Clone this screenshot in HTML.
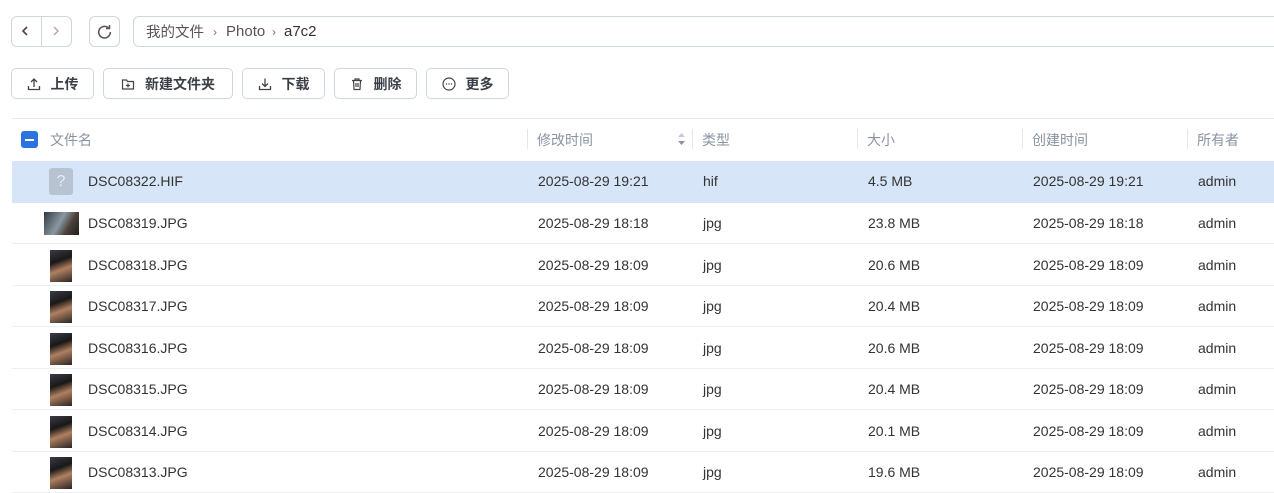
<!DOCTYPE html>
<html><head><meta charset="utf-8"><style>
*{box-sizing:border-box;margin:0;padding:0}
body{width:1274px;height:472px;overflow:hidden;background:#fff;font-family:"Liberation Sans","Noto Sans CJK SC",sans-serif;color:#333;position:relative}
.a{position:absolute}
.box{position:absolute;border:1px solid #cfd6e0;border-radius:6px;background:#fff}
.btn{position:absolute;top:68px;height:31px;border:1px solid #cfd6e0;border-radius:5px;display:flex;align-items:center;justify-content:center;font-size:14px;font-weight:bold;color:#3a3f47;gap:10px}
.btn svg{width:14px;height:14px}
.hd{position:absolute;top:130px;font-size:14px;color:#8a93a0}
.sep{position:absolute;top:129px;width:1px;height:20px;background:#e3e7ec}
.row{position:absolute;left:12px;width:1262px;height:41px;border-bottom:1px solid #edf0f3;font-size:14px;color:#333}
.row span{position:absolute;top:12px}
.th{position:absolute;left:38px;top:5px;width:22px;height:32px;background:linear-gradient(160deg,#3a3c48 0%,#1a1818 35%,#b08060 60%,#2a2424 100%)}
.bc{position:absolute;top:22px;height:20px;line-height:20px;font-size:15px;color:#555}
</style></head><body>
<div class="box" style="left:11px;top:16px;width:61px;height:31px"></div>
<div class="a" style="left:41px;top:17px;width:1px;height:29px;background:#cfd6e0"></div>
<svg class="a" style="left:21px;top:25px" width="10" height="12"><path d="M6 2 L2 6 L6 10" stroke="#444" stroke-width="1.6" fill="none"/></svg>
<svg class="a" style="left:51px;top:25px" width="10" height="12"><path d="M3 2 L7 6 L3 10" stroke="#aaa" stroke-width="1.4" fill="none"/></svg>
<div class="box" style="left:89px;top:16px;width:31px;height:31px"></div>
<svg class="a" style="left:96px;top:23px" width="17" height="17" viewBox="0 0 17 17"><path d="M13 5.5 A5.8 5.8 0 1 0 14.3 9" stroke="#555" stroke-width="1.5" fill="none"/><path d="M10 5.5 H13.5 V2" stroke="#555" stroke-width="1.5" fill="none"/></svg>
<div class="box" style="left:133px;top:16px;width:1150px;height:31px"></div>
<div class="bc" style="left:146px;font-family:'Noto Sans CJK SC',sans-serif;font-size:14.5px">我的文件</div>
<div class="bc" style="left:213px;font-size:12px;color:#777">›</div>
<div class="bc" style="left:226px">Photo</div>
<div class="bc" style="left:272px;font-size:12px;color:#777">›</div>
<div class="bc" style="left:284px;color:#333">a7c2</div>

<div class="btn" style="left:11px;width:83px"><svg viewBox="0 0 14 14"><path d="M7 10V2M4 5l3-3 3 3M1.5 9v3.5h11V9" stroke="#444" stroke-width="1.3" fill="none"/></svg>上传</div>
<div class="btn" style="left:103px;width:130px"><svg viewBox="0 0 14 14"><path d="M1.5 3h4l1 1.5h6v7.5h-11z" stroke="#444" stroke-width="1.2" fill="none"/><path d="M7 6.5v4M5 8.5h4" stroke="#444" stroke-width="1.2"/></svg>新建文件夹</div>
<div class="btn" style="left:242px;width:83px"><svg viewBox="0 0 14 14"><path d="M7 1.5v8M4 6.5l3 3 3-3M1.5 9v3.5h11V9" stroke="#444" stroke-width="1.3" fill="none"/></svg>下载</div>
<div class="btn" style="left:334px;width:83px"><svg viewBox="0 0 14 14"><path d="M2 3.5h10M5 3.5V2h4v1.5M3.5 3.5l.5 9h6l.5-9M6 6v4M8 6v4" stroke="#444" stroke-width="1.2" fill="none"/></svg>删除</div>
<div class="btn" style="left:426px;width:83px"><svg viewBox="0 0 14 14"><circle cx="7" cy="7" r="6" stroke="#444" stroke-width="1.2" fill="none"/><circle cx="4.5" cy="7" r=".7" fill="#444"/><circle cx="7" cy="7" r=".7" fill="#444"/><circle cx="9.5" cy="7" r=".7" fill="#444"/></svg>更多</div>

<div class="a" style="left:12px;top:118px;width:1262px;height:1px;background:#e6eaee"></div>
<div class="a" style="left:21px;top:131px;width:17px;height:17px;border-radius:3px;background:#2a73e0"></div>
<div class="a" style="left:25px;top:139px;width:9px;height:2px;background:#fff"></div>
<div class="hd" style="left:50px">文件名</div>
<div class="sep" style="left:527px"></div><div class="hd" style="left:537px">修改时间</div>
<svg class="a" style="left:677px;top:131px" width="9" height="16"><path d="M1 6l3.5-4 3.5 4z" fill="#c5cbd3"/><path d="M1 10l3.5 4 3.5-4z" fill="#8a93a0"/></svg>
<div class="sep" style="left:692px"></div><div class="hd" style="left:702px">类型</div>
<div class="sep" style="left:857px"></div><div class="hd" style="left:867px">大小</div>
<div class="sep" style="left:1022px"></div><div class="hd" style="left:1032px">创建时间</div>
<div class="sep" style="left:1187px"></div><div class="hd" style="left:1197px">所有者</div>

<div class="row" style="top:161px;background:#d6e5f7;border:none;height:42px"><div class="a" style="left:37px;top:7px;width:24px;height:27px;border-radius:3px;background:#b7c3d0;color:#e8eef4;font-size:16px;text-align:center;line-height:27px">?</div><span style="left:76px">DSC08322.HIF</span><span style="left:526px">2025-08-29 19:21</span><span style="left:691px">hif</span><span style="left:856px">4.5 MB</span><span style="left:1021px">2025-08-29 19:21</span><span style="left:1186px">admin</span></div>
<div class="row" style="top:203px"><div class="th" style="left:32px;top:9px;width:35px;height:23px;background:linear-gradient(120deg,#303a44,#8a98a0 45%,#4a4038 70%,#202020)"></div><span style="left:76px">DSC08319.JPG</span><span style="left:526px">2025-08-29 18:18</span><span style="left:691px">jpg</span><span style="left:856px">23.8 MB</span><span style="left:1021px">2025-08-29 18:18</span><span style="left:1186px">admin</span></div>
<div class="row" style="top:245px"><div class="th"></div><span style="left:76px">DSC08318.JPG</span><span style="left:526px">2025-08-29 18:09</span><span style="left:691px">jpg</span><span style="left:856px">20.6 MB</span><span style="left:1021px">2025-08-29 18:09</span><span style="left:1186px">admin</span></div>
<div class="row" style="top:286px"><div class="th"></div><span style="left:76px">DSC08317.JPG</span><span style="left:526px">2025-08-29 18:09</span><span style="left:691px">jpg</span><span style="left:856px">20.4 MB</span><span style="left:1021px">2025-08-29 18:09</span><span style="left:1186px">admin</span></div>
<div class="row" style="top:328px"><div class="th"></div><span style="left:76px">DSC08316.JPG</span><span style="left:526px">2025-08-29 18:09</span><span style="left:691px">jpg</span><span style="left:856px">20.6 MB</span><span style="left:1021px">2025-08-29 18:09</span><span style="left:1186px">admin</span></div>
<div class="row" style="top:369px"><div class="th"></div><span style="left:76px">DSC08315.JPG</span><span style="left:526px">2025-08-29 18:09</span><span style="left:691px">jpg</span><span style="left:856px">20.4 MB</span><span style="left:1021px">2025-08-29 18:09</span><span style="left:1186px">admin</span></div>
<div class="row" style="top:411px"><div class="th"></div><span style="left:76px">DSC08314.JPG</span><span style="left:526px">2025-08-29 18:09</span><span style="left:691px">jpg</span><span style="left:856px">20.1 MB</span><span style="left:1021px">2025-08-29 18:09</span><span style="left:1186px">admin</span></div>
<div class="row" style="top:452px"><div class="th"></div><span style="left:76px">DSC08313.JPG</span><span style="left:526px">2025-08-29 18:09</span><span style="left:691px">jpg</span><span style="left:856px">19.6 MB</span><span style="left:1021px">2025-08-29 18:09</span><span style="left:1186px">admin</span></div>
</body></html>
